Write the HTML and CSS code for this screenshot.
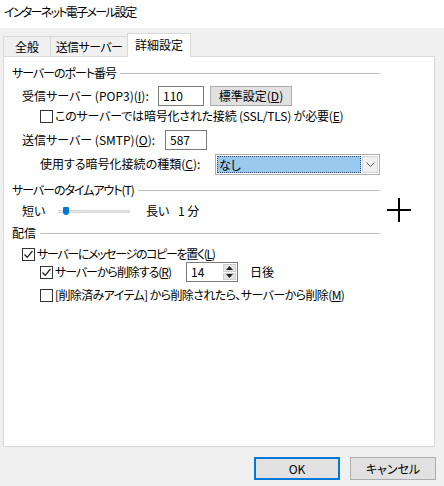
FILE: index.html
```html
<!DOCTYPE html>
<html lang="ja">
<head>
<meta charset="utf-8">
<link rel="stylesheet" href="styles.css">
</head>
<body>
<div class="titlebar"><span class="tight4">インターネット電子メール設定</span></div>
<div class="tabs">
  <div class="tab t1">全般</div>
  <div class="tab t2"><span class="tight1">送信サーバー</span></div>
  <div class="tab t3 active">詳細設定</div>
</div>
<div class="panel">
  <div class="group-head gh1"><span class="tight2">サーバーのポート番号</span><i class="rule"></i></div>
  <div class="row r1 ind1">
    <span class="lbl lw1">受信サーバー (POP3)(<u>I</u>):</span>
    <span class="field fw1">110</span>
    <span class="pbtn">標準設定(<u>D</u>)</span>
  </div>
  <div class="row r2 ind2">
    <span class="cb"></span><span class="tight0">このサーバーでは暗号化された接続 (SSL/TLS) が必要(<u>E</u>)</span>
  </div>
  <div class="row r3 ind1">
    <span class="lbl lw3">送信サーバー (SMTP)(<u>O</u>):</span>
    <span class="field fw3">587</span>
  </div>
  <div class="row r4 ind2">
    <span class="lbl lw4">使用する暗号化接続の種類(<u>C</u>):</span>
    <span class="select"><span class="sel-val"><span>なし</span></span><span class="sel-btn"><svg width="9" height="5" viewBox="0 0 9 5"><path d="M0.5 0.5 L4.5 4.5 L8.5 0.5" fill="none" stroke="#555" stroke-width="1"/></svg></span></span>
  </div>
  <div class="group-head gh2"><span class="tight2">サーバーのタイムアウト(T)</span><i class="rule"></i></div>
  <div class="row r5 ind1">
    <span class="lbl lw5">短い</span>
    <span class="slider"><span class="track"></span><span class="thumb"></span></span>
    <span class="lbl lw6">長い</span>
    <span>1 分</span>
  </div>
  <div class="group-head gh3"><span>配信</span><i class="rule"></i></div>
  <div class="row r6 ind1">
    <span class="cb checked"><svg width="11" height="11" viewBox="0 0 11 11"><path d="M1.5 5.5 L4.2 8.3 L9.5 2" fill="none" stroke="#222" stroke-width="1.3"/></svg></span><span class="tight3">サーバーにメッセージのコピーを置く(<u>L</u>)</span>
  </div>
  <div class="row r7 ind2">
    <span class="lbl lw7"><span class="cb checked"><svg width="11" height="11" viewBox="0 0 11 11"><path d="M1.5 5.5 L4.2 8.3 L9.5 2" fill="none" stroke="#222" stroke-width="1.3"/></svg></span><span class="tight2">サーバーから削除する(<u>R</u>)</span></span>
    <span class="spin"><span class="spin-val">14</span><span class="spin-btns"><span class="sb"><svg width="7" height="4" viewBox="0 0 7 4"><path d="M0 4 L3.5 0 L7 4Z" fill="#222"/></svg></span><span class="sb"><svg width="7" height="4" viewBox="0 0 7 4"><path d="M0 0 L3.5 4 L7 0Z" fill="#222"/></svg></span></span></span>
    <span class="days">日後</span>
  </div>
  <div class="row r8 ind2">
    <span class="cb"></span><span class="tight1">[削除済みアイテム] から削除されたら、サーバーから削除(<u>M</u>)</span>
  </div>
</div>
<div class="footer">
  <button class="btn default">OK</button>
  <button class="btn">キャンセル</button>
</div>
<div class="cursor"><i class="ch"></i><i class="cv"></i></div>
</body>
</html>
```

FILE: styles.css
```css
* { box-sizing: border-box; }
html, body { margin: 0; padding: 0; }
body {
  width: 444px;
  height: 486px;
  background: #f0f0f0;
  font-family: "Noto Sans CJK JP", "Noto Sans", sans-serif;
  font-size: 12px;
  line-height: 16px;
  color: #000;
  font-feature-settings: "palt";
  position: relative;
  overflow: hidden;
}
u { text-decoration: underline; text-underline-offset: 1px; }

.tight0 { letter-spacing: -0.2px; }
.tight1 { letter-spacing: -0.6px; }
.tight2 { letter-spacing: -1.05px; }
.tight3 { letter-spacing: -1.35px; }
.tight4 { letter-spacing: -1.7px; }

.titlebar {
  height: 28px;
  background: #fff;
  padding-left: 4px;
  line-height: 24px;
}

.tabs {
  display: flex;
  align-items: flex-end;
  height: 28px;
  padding-left: 3px;
  position: relative;
  z-index: 2;
}
.tab {
  height: 20px;
  line-height: 19px;
  text-align: center;
  border: 1px solid #d9d9d9;
  border-bottom: none;
  background: #f0f0f0;
  margin-right: -1px;
}
.t1 { width: 48px; }
.t2 { width: 78px; }
.t3 { width: 64px; }
.tab.active {
  height: 24px;
  line-height: 22px;
  background: #fff;
  margin-bottom: -1px;
  border-color: #d9d9d9;
}

.panel {
  margin-left: 3px;
  width: 432px;
  height: 391px;
  background: #fff;
  border: 1px solid #d9d9d9;
  padding: 6px 0 0 8px;
}

.group-head {
  display: flex;
  align-items: center;
  width: 368px;
  height: 20px;
  gap: 4px;
}
.rule { flex: 1; height: 1px; background: #bdbdbd; }
.gh2 { margin-top: 5px; }
.gh3 { margin-top: 3px; }

.row { display: flex; align-items: center; }
.ind1 { padding-left: 10px; }
.ind2 { padding-left: 28px; }
.r1 { height: 22px; margin-top: 2px; }
.r2 { height: 18px; }
.r3 { height: 22px; margin-top: 4px; }
.r4 { height: 22px; margin-top: 2px; }
.r5 { height: 18px; margin-top: 2px; }
.r6 { height: 16px; margin-top: 3px; }
.r7 { height: 20px; }
.r8 { height: 18px; margin-top: 4px; }

.lbl { display: inline-flex; align-items: center; flex: none; }
.lw1 { width: 136px; }
.lw3 { width: 143px; }
.lw4 { width: 175px; }
.lw5 { width: 36px; }
.lw6 { width: 32px; }
.lw7 { width: 146px; }

.field {
  height: 20px;
  border: 1px solid #7a7a7a;
  background: #fff;
  padding-left: 4px;
  line-height: 18px;
}
.fw1 { width: 46px; }
.fw3 { width: 42px; }

.pbtn {
  margin-left: 6px;
  width: 82px;
  height: 20px;
  border: 1px solid #adadad;
  background: #e1e1e1;
  text-align: center;
  line-height: 18px;
}

.cb {
  width: 13px;
  height: 13px;
  border: 1px solid #333;
  background: #fff;
  margin-right: 2px;
  flex: none;
  display: inline-flex;
  align-items: center;
  justify-content: center;
}

.select {
  width: 165px;
  height: 21px;
  border: 1px solid #adadad;
  background: #fff;
  display: flex;
  padding: 1px;
}
.sel-val {
  flex: 1;
  background: #99c9ef;
  border: 1px dotted #2a4a7a;
  line-height: 15px;
  padding-left: 1px;
}
.sel-btn {
  width: 16px;
  margin-left: 1px;
  background: #f0f0f0;
  border: 1px solid #d4d4d4;
  display: flex;
  align-items: center;
  justify-content: center;
}

.slider {
  position: relative;
  width: 88px;
  height: 18px;
  display: flex;
  align-items: center;
  flex: none;
}
.track {
  width: 72px;
  height: 3px;
  background: #e7e7e7;
  border: 1px solid #d6d6d6;
  border-width: 1px 0;
}
.thumb {
  position: absolute;
  left: 5px;
  top: 5px;
  width: 6px;
  height: 8px;
  background: #0078d7;
  border-radius: 1px 1px 3px 3px;
}

.spin {
  width: 52px;
  height: 20px;
  border: 1px solid #7a7a7a;
  background: #fff;
  display: flex;
}
.spin-val { flex: 1; padding-left: 4px; line-height: 18px; }
.spin-btns {
  width: 14px;
  display: flex;
  flex-direction: column;
  gap: 1px;
  padding: 1px 1px 1px 0;
}
.sb {
  flex: 1;
  background: #e5e5e5;
  border: 1px solid #cfcfcf;
  display: flex;
  align-items: center;
  justify-content: center;
}
.days { margin-left: 12px; }

.footer {
  display: flex;
  justify-content: flex-end;
  gap: 10px;
  padding-right: 8px;
  margin-top: 10px;
}
.btn {
  width: 86px;
  height: 23px;
  border: 1px solid #adadad;
  background: #e1e1e1;
  font: inherit;
  font-size: 12px;
  padding: 0;
  color: #000;
}
.btn.default { border: 2px solid #0078d7; }

.cursor {
  position: absolute;
  left: 387px;
  top: 198px;
  width: 24px;
  height: 24px;
}
.ch { position: absolute; left: 0; top: 11px; width: 24px; height: 2px; background: #000; }
.cv { position: absolute; left: 11px; top: 0; width: 2px; height: 24px; background: #000; }
```
